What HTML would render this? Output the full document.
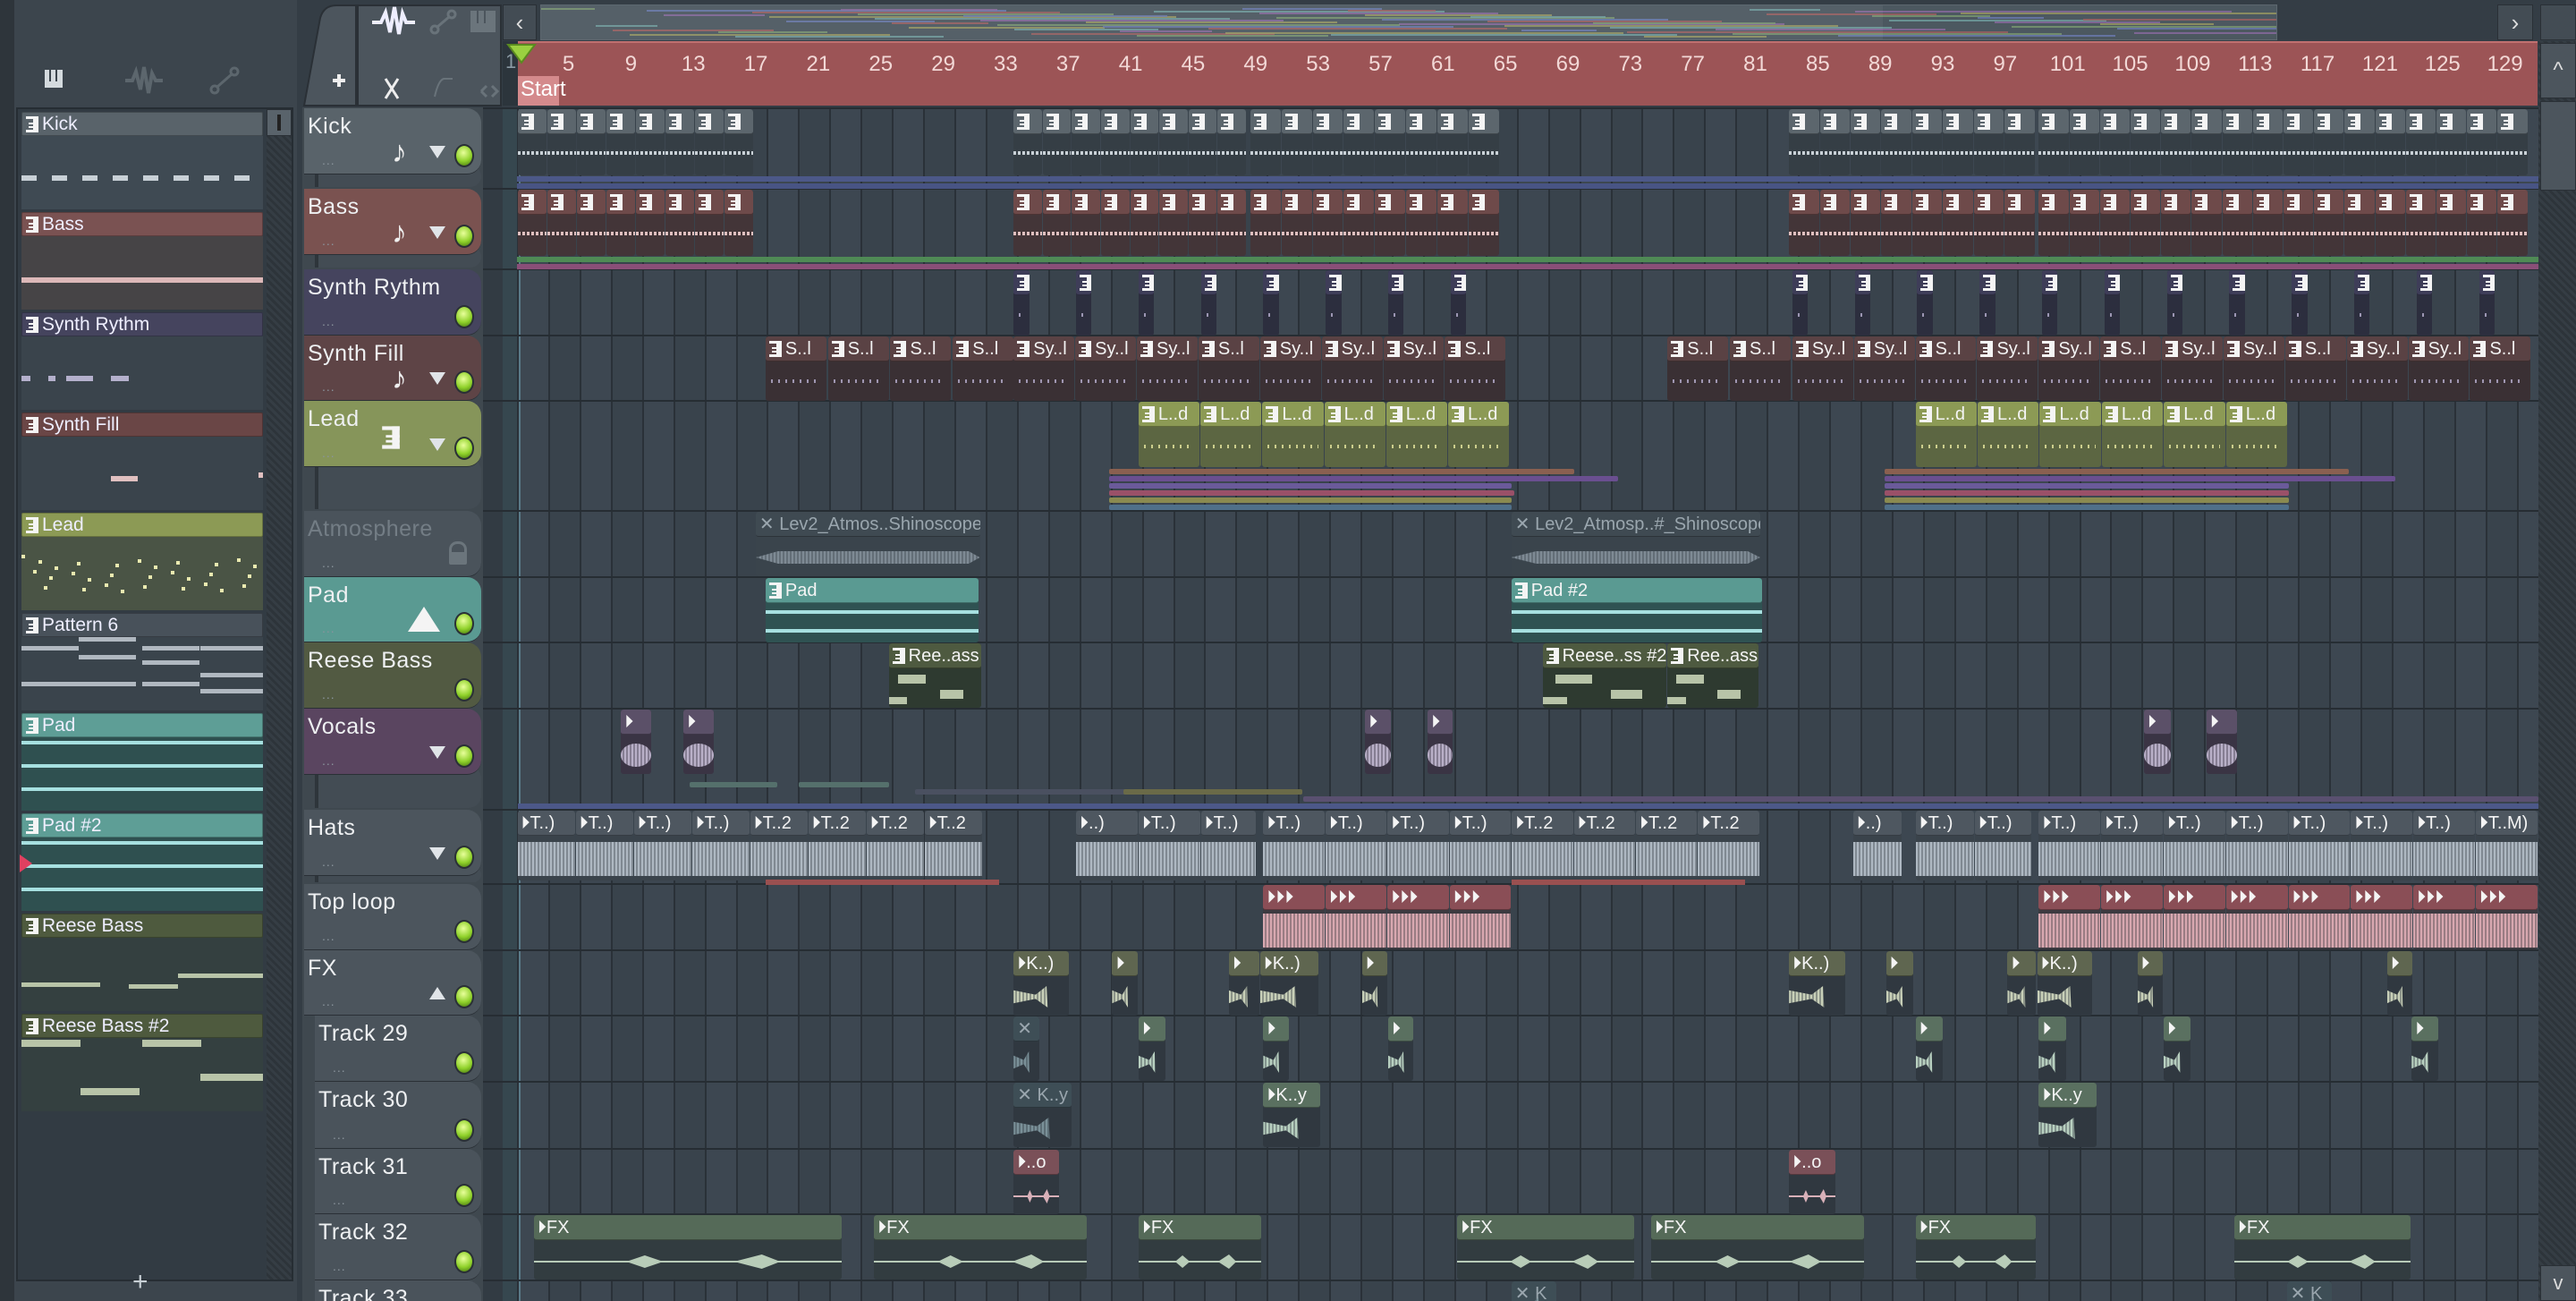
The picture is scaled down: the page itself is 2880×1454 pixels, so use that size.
<!DOCTYPE html>
<html><head><meta charset="utf-8">
<style>
*{box-sizing:border-box;margin:0;padding:0}
html,body{width:2880px;height:1454px;overflow:hidden;background:#343d45;font-family:"Liberation Sans Narrow","Liberation Sans",sans-serif;}
#root{position:relative;width:2880px;height:1454px;overflow:hidden;background:#343d45}
.a{position:absolute}
.t{color:#e8ecef;font-size:24px;white-space:nowrap;line-height:1}
.clip{position:absolute;overflow:hidden;border-radius:2px}
.ic{display:inline-block;width:14px;height:18px;vertical-align:-3px;margin-right:4px;background:
linear-gradient(#f4f4f4,#f4f4f4) 0 0/14px 3px no-repeat,
linear-gradient(#f4f4f4,#f4f4f4) 8px 0/6px 18px no-repeat,
linear-gradient(#f4f4f4,#f4f4f4) 0 15px/14px 3px no-repeat,
linear-gradient(#f4f4f4,#f4f4f4) 3px 7px/11px 2px no-repeat,
linear-gradient(#f4f4f4,#f4f4f4) 3px 11px/11px 2px no-repeat}
</style></head><body>
<div id="root">
<!-- left strip -->
<div class="a" style="left:0;top:0;width:16px;height:1454px;background:#2e353b"></div>
<div class="a" style="left:16px;top:0;width:316px;height:1454px;background:#3c454d"></div>
<div class="a" style="left:18px;top:120px;width:310px;height:1312px;background:#323b43;border:2px solid #262d33"></div>
<div class="a" style="left:298px;top:122px;width:28px;height:1308px;background:repeating-linear-gradient(45deg,#353d44 0 3px,#2d343a 3px 6px)"></div>
<div class="a" style="left:298px;top:122px;width:28px;height:30px;background:#59636b;border:1px solid #2a3036"><div class="a" style="left:11px;top:5px;width:4px;height:18px;background:#222"></div></div>
<div class="a t" style="left:148px;top:1418px;font-size:30px;color:#c8d0d6">+</div>

<!-- picker top icons -->
<svg class="a" style="left:40px;top:70px" width="280" height="40">
 <g fill="#d4dade"><rect x="10" y="8" width="20" height="20"/></g>
 <g fill="#3c454d"><rect x="15" y="8" width="2" height="13"/><rect x="22" y="8" width="2" height="13"/></g>
 <path d="M100 20 L108 20 L112 10 L117 30 L121 5 L126 34 L130 12 L134 20 L142 20" stroke="#5c666d" stroke-width="4" fill="none"/>
 <g stroke="#5c666d" stroke-width="3" fill="none"><circle cx="200" cy="30" r="4"/><circle cx="222" cy="10" r="4"/><line x1="203" y1="27" x2="219" y2="13"/></g>
</svg>

<!-- track header toolbar -->
<svg class="a" style="left:338px;top:0" width="225" height="120">
 <path d="M2 118 L20 20 Q24 6 38 6 L60 6 L60 118 Z" fill="#4c555d" stroke="#2a3036" stroke-width="2"/>
 <rect x="62" y="6" width="160" height="112" fill="#4c555d" stroke="#2a3036" stroke-width="2"/>
 <path d="M78 25 L88 25 L93 14 L98 36 L103 8 L108 38 L112 15 L116 25 L126 25" stroke="#eef" stroke-width="4" fill="none"/>
 <g stroke="#69737a" stroke-width="3" fill="none"><circle cx="148" cy="33" r="4"/><circle cx="167" cy="16" r="4"/><line x1="151" y1="30" x2="164" y2="19"/></g>
 <rect x="188" y="12" width="28" height="24" fill="#6b757c"/>
 <rect x="195" y="12" width="2" height="14" fill="#4c555d"/><rect x="203" y="12" width="2" height="14" fill="#4c555d"/>
 <path d="M34 90 L48 90 M41 83 L41 97" stroke="#eee" stroke-width="4"/>
 <path d="M93 88 L107 110 M107 88 L93 110" stroke="#eee" stroke-width="3"/>
 <path d="M148 108 Q152 90 158 88 L168 88" stroke="#69737a" stroke-width="2" fill="none"/>
 <path d="M200 102 L206 96 M200 102 L206 108 M212 96 L218 102 L212 108" stroke="#69737a" stroke-width="3" fill="none"/>
</svg>

<!-- top overview -->
<div class="a" style="left:562px;top:5px;width:38px;height:40px;background:#434c54;border:1px solid #2a3036;color:#ddd;font-size:26px;text-align:center;line-height:38px">‹</div>
<div class="a" style="left:604px;top:5px;width:1942px;height:40px;background:#4c5860;border:1px solid #5c676f;overflow:hidden" id="ov"></div>
<div class="a" style="left:2792px;top:5px;width:40px;height:40px;background:#434c54;border:1px solid #2a3036;color:#ddd;font-size:26px;text-align:center;line-height:38px">›</div>
<div class="a" style="left:2840px;top:5px;width:40px;height:40px;background:#434c54;border:1px solid #2a3036"></div>

<!-- ruler -->
<div class="a" style="left:562px;top:46px;width:17px;height:72px;background:#2c353c"></div>
<div class="a" style="left:579px;top:46px;width:2258px;height:72px;background:#9c5456;border-top:2px solid #c07070" id="ruler"></div>
<div class="a" style="left:579px;top:85px;width:46px;height:33px;background:#d48a8c"></div>
<div class="a t" style="left:582px;top:88px;font-size:24px;color:#fff">Start</div>
<div class="a t" style="left:565px;top:58px;font-size:22px;color:#8a9aa4">1</div>
<svg class="a" style="left:566px;top:48px" width="34" height="24"><path d="M2 2 L32 2 L17 22 Z" fill="#9ad040" stroke="#5a8a20" stroke-width="2"/></svg>

<!-- right scrollbar -->
<div class="a" style="left:2838px;top:46px;width:42px;height:1408px;background:repeating-linear-gradient(45deg,#353d44 0 3px,#2d343a 3px 6px)"></div>
<div class="a" style="left:2840px;top:48px;width:40px;height:62px;background:#4c555d;border:1px solid #2a3036;color:#ddd;text-align:center;font-size:24px;line-height:60px">^</div>
<div class="a" style="left:2840px;top:113px;width:40px;height:100px;background:#4c555d;border:1px solid #2a3036"></div>
<div class="a" style="left:2840px;top:1414px;width:40px;height:40px;background:#4c555d;border:1px solid #2a3036;color:#ddd;text-align:center;font-size:22px;line-height:38px">v</div>

<!-- grid -->
<div class="a" id="grid" style="left:538px;top:120px;width:2300px;height:1334px;background:#3d4751;overflow:hidden"></div>
</div>

<script>
const P=v=>v*1.8367;
function el(parent,css,html){const d=document.createElement('div');d.style.cssText='position:absolute;'+css;if(html)d.innerHTML=html;parent.appendChild(d);return d;}
const B=document.getElementById('root'),G=document.getElementById('grid');
const GX=538,GY=120;
el(G,'left:0;top:0;width:24px;height:1334px;background:#323b43');
el(G,'left:24px;top:0;width:16px;height:1334px;background:#36474f');
el(G,'left:42px;top:0;width:2px;height:1334px;background:#5a7a88');
for(let i=0;i<66;i++){let x=40+i*34.93;
 if(i%2==1)el(G,`left:${x}px;top:0;width:35px;height:1334px;background:#39434c`);
 el(G,`left:${x}px;top:0;width:2px;height:1334px;background:#2a3138`);}
const R=document.getElementById('ruler');
for(let n=5;n<=129;n+=4){let cx=565.7+(n-1)*17.46-579;el(R,`left:${cx-20}px;top:10px;width:40px;text-align:center;color:#f2d8d6;font-size:24px;font-family:'Liberation Sans Narrow','Liberation Sans',sans-serif`,n);}
const O=document.getElementById('ov');
const oc=['#7a9a70','#8a6aa0','#6a7ab0','#9a9a60','#a06060','#70a0a0'];
for(let i=0;i<60;i++){let x=(i*137)%1800,w=60+(i*53)%400,y=3+(i*7)%32;el(O,`left:${x}px;top:${y}px;width:${w}px;height:2px;background:${oc[i%6]};opacity:.8`);}
el(O,'left:0;top:0;width:1500px;height:40px;background:rgba(255,255,255,0.05)');

const tops=[121,211,301,375,448,571,645,718,792,905,988,1062,1135,1209,1284,1357,1431,1520];
const hexH=[[0,'Kick','#59636a',195,1],[1,'Bass','#7a5250',285,1],[2,'Synth Rythm','#45445e',375,0],[3,'Synth Fill','#5e4446',448,1],[4,'Lead','#86955a',522,2],[5,'Atmosphere','#4a535b',645,3],[6,'Pad','#5a9a92',718,4],[7,'Reese Bass','#525a42',792,0],[8,'Vocals','#5a4560',866,5],[9,'Hats','#4c555d',979,5],[10,'Top loop','#4c555d',1062,0],[11,'FX','#4c555d',1135,6],[12,'Track 29','#4a535b',1209,0],[13,'Track 30','#4a535b',1284,0],[14,'Track 31','#4a535b',1357,0],[15,'Track 32','#4a535b',1431,0],[16,'Track 33','#4a535b',1505,0]];
tops.forEach(t=>el(G,`left:0;top:${t-GY-1}px;width:2300px;height:2px;background:#262d33`));
el(B,'left:338px;top:120px;width:202px;height:1334px;background:#3f484f');
hexH.forEach(([i,name,col,bot,icon])=>{
 let top=tops[i],gb=tops[i+1];
 let sub=i>=12;let lx=sub?352:340;
 if(bot<gb-4) el(B,`left:${lx+12}px;top:${bot-10}px;width:${538-lx-12}px;height:${gb-bot+8}px;background:#434c54;border-radius:0 14px 14px 0;border-left:4px solid #2e353b`);
 let h=el(B,`left:${lx}px;top:${top}px;width:${538-lx}px;height:${bot-top}px;background:${col};border-radius:0 16px 16px 0;border-bottom:1px solid #2a3036`);
 el(h,`left:4px;top:6px;font-size:25px;color:${i==5?'#737d85':'#eef0f2'};white-space:nowrap;letter-spacing:0.5px`,name);
 el(h,`left:20px;top:${bot-top-24}px;color:#8a949c;font-size:14px;letter-spacing:1px`,'...');
 if(i!=5){el(h,`left:${538-lx-30}px;top:${bot-top-34}px;width:22px;height:26px;border-radius:50%;background:radial-gradient(circle at 45% 35%,#e8ff9a,#8fd12a 55%,#3f6a10);border:2px solid #2a3036`);}
 if(icon==1) el(h,`left:${538-lx-100}px;top:${bot-top-44}px;font-size:34px;color:#eee`,'♪');
 if(icon==1||icon==5) el(h,`left:${538-lx-58}px;top:${bot-top-32}px;width:0;height:0;border-left:9px solid transparent;border-right:9px solid transparent;border-top:14px solid #e0e4e8`);
 if(icon==6) el(h,`left:${538-lx-58}px;top:${bot-top-32}px;width:0;height:0;border-left:9px solid transparent;border-right:9px solid transparent;border-bottom:14px solid #e0e4e8`);
 if(icon==4) el(h,`left:${538-lx-82}px;top:${bot-top-40}px;width:0;height:0;border-left:18px solid transparent;border-right:18px solid transparent;border-bottom:28px solid #f4f4f4`);
 if(icon==2) el(h,`left:${538-lx-108}px;top:${bot-top-42}px`,'<span class="ic" style="transform:scale(1.4)"></span>');
 if(icon==2) el(h,`left:${538-lx-58}px;top:${bot-top-32}px;width:0;height:0;border-left:9px solid transparent;border-right:9px solid transparent;border-top:14px solid #e0e4e8`);
 if(icon==3) el(h,`left:${538-lx-36}px;top:${bot-top-40}px;width:20px;height:26px;border:3px solid #6b757c;border-radius:9px 9px 2px 2px;border-bottom:14px solid #6b757c`);
});

const TY={
 kick:['#5c666d','#353e45','pat'],bass:['#6e4a4a','#433538','pat'],synr:['#3e3d58','#2c2e3e','pat'],synf:['#5a4244','#3a3034','pat'],
 lead:['#8c9a55','#5c6642','pat'],atm:['#3f4a52','#3a444c','wave'],pad:['#5a9a92','#2f5252','pad'],reese:['#4e5a40','#2e3a30','reese'],
 voc:['#5b5068','#3a3444','wave'],hats:['#4e5760','#3a434b','wave'],top:['#8a4e56','#3c3a40','wave'],fx:['#5f6650','#303840','wave'],
 t29:['#3e4e56','#303840','wave'],t29g:['#5a7060','#303840','wave'],fxl:['#556a58','#323c40','line'],t31:['#7a5058','#303840','line']};
const WC={atm:'#7e8a94',voc:'#b9b0c8',hats:'#aeb8c2',top:'#d8a8b0',fx:'#c8d0b8',t29:'#7a9098',t29g:'#b8d0c0',fxl:'#b8ccb8',t31:'#d8b0b8'};
function clip(ti,x1,x2,ty,label,h){
 let [hc,bc,kind]=TY[ty];let top=tops[ti]+1;let ht=h||72;
 let X=P(x1),W=P(x2)-P(x1)-1;
 let c=el(G,`left:${X-GX}px;top:${top-GY}px;width:${W}px;height:${ht}px;background:${bc};border-radius:3px`);c.className='clip';
 let hd=el(c,`left:0;right:0;top:0;height:28px;background:${hc};border-radius:3px;color:#f4f4f4;font-size:20px;line-height:28px;padding-left:4px;white-space:nowrap;overflow:hidden;border-bottom:1px solid rgba(0,0,0,.3)`);
 let icon=(kind=='pat'||kind=='pad'||kind=='reese')?'<span class="ic"></span>':(ty=='atm'||ty=='t29'&&label.indexOf('✕')==0?'':'⏵');
 hd.innerHTML=icon+(label||'');
 if(ty=='atm'||ty=='t29') hd.style.color='#9aa6ae';
 let by=30,bh=ht-30;
 if(kind=='pat'){let lc=ty=='kick'?'#c8d0d6':ty=='bass'?'#e0c0c0':ty=='lead'?'#e8e8a0':'#b8b0d0';
  if(ty=='kick'||ty=='bass') el(c,`left:0;right:0;top:${by+17}px;height:4px;background:repeating-linear-gradient(90deg,${lc} 0 3px,transparent 3px 5px)`);
  else el(c,`left:6px;right:6px;top:${by+18}px;height:4px;background:repeating-linear-gradient(90deg,${lc} 0 2px,transparent 2px 8px);opacity:.8`);}
 if(kind=='wave'){let wc=WC[ty];let amp=ty=='hats'?38:ty=='top'?38:ty=='voc'?26:ty=='atm'?14:24;
  el(c,`left:0;right:0;top:${by+bh/2-amp/2}px;height:${amp}px;background:repeating-linear-gradient(90deg,${wc} 0 2px,${wc}99 2px 4px);`+((ty=='fx'||ty=='t29'||ty=='t29g')?`clip-path:polygon(0 20%,40% 40%,60% 0,62% 100%,40% 60%,0 80%)`:ty=='voc'?`border-radius:50%`:ty=='atm'?`clip-path:polygon(0 50%,10% 0,95% 0,100% 50%,95% 100%,10% 100%)`:''));}
 if(kind=='line'){let wc=WC[ty];el(c,`left:0;right:0;top:${by+bh/2}px;height:2px;background:${wc}`);
  el(c,`left:30%;width:12%;top:${by+bh/2-6}px;height:14px;background:${wc};clip-path:polygon(0 50%,50% 0,100% 50%,50% 100%)`);
  el(c,`left:65%;width:15%;top:${by+bh/2-7}px;height:16px;background:${wc};clip-path:polygon(0 50%,60% 0,100% 50%,60% 100%)`);}
 if(kind=='pad'){for(let k=0;k<3;k++)el(c,`left:0;right:0;top:${by+6+k*21}px;height:4px;background:#a6e0e0`);}
 if(kind=='reese'){el(c,`left:10%;width:30%;top:${by+5}px;height:10px;background:#b8c4a8`);el(c,`left:55%;width:25%;top:${by+22}px;height:10px;background:#b8c4a8`);el(c,`left:0;width:20%;top:${by+30}px;height:8px;background:#b8c4a8`);}
 return c;}
const kb=[[315,459,8],[617,759,8],[761,913,8],[1089,1239,8],[1241,1539,16]];
kb.forEach(([a,b,n])=>{let w=(b-a)/n;for(let k=0;k<n;k++){clip(0,a+k*w,a+(k+1)*w,'kick','',74);clip(1,a+k*w,a+(k+1)*w,'bass','',74);}});
el(G,`left:40px;top:${197-GY}px;width:2260px;height:6px;background:#4c5888`);
el(G,`left:40px;top:${205-GY}px;width:2260px;height:6px;background:#485484`);
el(G,`left:40px;top:${287-GY}px;width:2260px;height:6px;background:#4f8a55`);
el(G,`left:40px;top:${295-GY}px;width:2260px;height:6px;background:#8a4f78`);
[617,655,693,731,769,807,845,883,1091,1129,1167,1205,1243,1281,1319,1357,1395,1433,1471,1509].forEach(x=>clip(2,x,x+10,'synr','',73));
[466,504,542,580].forEach(x=>clip(3,x,x+37.5,'synf','S..l',72));
for(let k=0;k<8;k++)clip(3,617+k*37.5,617+(k+1)*37.5,'synf',k%4==3?'S..l':'Sy..l',72);
[1015,1053].forEach(x=>clip(3,x,x+37.5,'synf','S..l',72));
for(let k=0;k<12;k++)clip(3,1091+k*37.5,1091+(k+1)*37.5,'synf',k%3==2?'S..l':'Sy..l',72);
for(let k=0;k<6;k++){clip(4,693+k*37.7,693+(k+1)*37.7,'lead','L..d',73);clip(4,1166+k*37.8,1166+(k+1)*37.8,'lead','L..d',73);}
const lc=['#8a6050','#6a4f90','#6a5a9a','#9a5068','#8a8a50','#50708a'];
lc.forEach((c,k)=>{el(G,`left:${P(675)-GX}px;top:${524-GY+k*8}px;width:${P([958,985,920,922,920,920][k])-P(675)}px;height:6px;background:${c};border-radius:2px`);
 el(G,`left:${P(1147)-GX}px;top:${524-GY+k*8}px;width:${P([1430,1458,1393,1393,1393,1393][k])-P(1147)}px;height:6px;background:${c};border-radius:2px`);});
clip(5,460,597,'atm','✕ Lev2_Atmos..Shinoscope',72);
clip(5,920,1072,'atm','✕ Lev2_Atmosp..#_Shinoscope',72);
clip(6,466,596,'pad','Pad',72);clip(6,920,1073,'pad','Pad #2',72);
clip(7,541,598,'reese','Ree..ass',72);clip(7,939,1015,'reese','Reese..ss #2',72);clip(7,1015,1071,'reese','Ree..ass',72);
[[378,397],[416,435],[831,847],[869,885],[1305,1322],[1343,1362]].forEach(([a,b])=>clip(8,a,b,'voc','',72));
[[1,420,473,'#55706c'],[1,486,541,'#55706c'],[2,557,793,'#4a5060'],[2,684,793,'#6a6a48'],[4,541,1545,'#4c5a90'],[3,793,1545,'#5a5070']].forEach(([r,a,b,c])=>el(G,`left:${P(a)-GX}px;top:${866-GY+r*8}px;width:${P(b)-P(a)}px;height:6px;background:${c};border-radius:2px`));
el(G,`left:${P(315)-GX}px;top:${898-GY}px;width:${P(1545)-P(315)}px;height:6px;background:#4c5888`);
for(let k=0;k<8;k++)clip(9,315+k*35.4,315+(k+1)*35.4,'hats',k<4?'T..)':'T..2',78);
[[655,693,'..)'],[693,731,'T..)'],[731,765,'T..)']].forEach(([a,b,l])=>clip(9,a,b,'hats',l,78));
for(let k=0;k<8;k++)clip(9,769+k*37.8,769+(k+1)*37.8,'hats',k<4?'T..)':'T..2',78);
clip(9,1128,1158,'hats','..)',78);clip(9,1166,1202,'hats','T..)',78);clip(9,1202,1237,'hats','T..)',78);
for(let k=0;k<8;k++)clip(9,1241+k*38,1241+(k+1)*38,'hats',k==7?'T..M)':'T..)',78);
el(G,`left:${P(466)-GX}px;top:${983-GY}px;width:${P(608)-P(466)}px;height:6px;background:#9a5050`);
el(G,`left:${P(920)-GX}px;top:${983-GY}px;width:${P(1062)-P(920)}px;height:6px;background:#9a5050`);
for(let k=0;k<4;k++)clip(10,769+k*37.8,769+(k+1)*37.8,'top','⏵⏵',72);
for(let k=0;k<8;k++)clip(10,1241+k*38,1241+(k+1)*38,'top','⏵⏵',72);
[[617,651,'K..)'],[677,693,''],[748,767,''],[767,803,'K..)'],[829,845,''],[1089,1124,'K..)'],[1148,1165,''],[1222,1240,''],[1240,1274,'K..)'],[1301,1317,''],[1453,1469,'']].forEach(([a,b,l])=>clip(11,a,b,'fx',l,72));
[[617,633,'t29','✕'],[693,710,'t29g',''],[769,785,'t29g',''],[845,861,'t29g',''],[1166,1183,'t29g',''],[1241,1258,'t29g',''],[1317,1334,'t29g',''],[1468,1485,'t29g','']].forEach(([a,b,t,l])=>clip(12,a,b,t,l,72));
clip(13,617,653,'t29','✕ K..y',72);clip(13,769,804,'t29g','K..y',72);clip(13,1241,1277,'t29g','K..y',72);
clip(14,617,645,'t31','..o',72);clip(14,1089,1118,'t31','..o',72);
[[325,513],[532,662],[693,768],[887,995],[1005,1135],[1166,1240],[1360,1468]].forEach(([a,b])=>clip(15,a,b,'fxl','FX',72));
clip(16,920,948,'t29','✕ K',30);clip(16,1392,1420,'t29','✕ K',30);

const pk=[['Kick','#59636a','#3f4a53','kick'],['Bass','#7a5252','#464446','bass'],['Synth Rythm','#45445e','#3a444c','sr'],['Synth Fill','#6a4646','#3a444c','sf'],['Lead','#8c9a55','#4a5445','lead'],['Pattern 6','#48515a','#3a444c','p6'],['Pad','#5e9e96','#2f5050','pad'],['Pad #2','#5e9e96','#2f5050','pad'],['Reese Bass','#4e5a3e','#344040','r1'],['Reese Bass #2','#4e5a3e','#344040','r2']];
pk.forEach(([n,hc,bc,k],i)=>{let y=125+i*112;
 let b=el(B,`left:24px;top:${y+27}px;width:270px;height:82px;background:${bc}`);
 el(B,`left:24px;top:${y}px;width:270px;height:27px;background:${hc};border:1px solid rgba(0,0,0,.25);border-radius:2px;color:#eef;font-size:21px;line-height:25px;padding-left:4px;white-space:nowrap`,'<span class="ic"></span>'+n);
 if(k=='kick')for(let j=0;j<8;j++)el(b,`left:${j*34}px;top:44px;width:17px;height:6px;background:#c8d0d6`);
 if(k=='bass')el(b,`left:0;width:270px;top:46px;height:6px;background:#dcb8b8`);
 if(k=='sr')[[0,10],[30,8],[50,30],[100,20]].forEach(([a,w])=>el(b,`left:${a}px;width:${w}px;top:44px;height:6px;background:#b4b0cc`));
 if(k=='sf'){el(b,`left:100px;width:30px;top:44px;height:6px;background:#e0c0c0`);el(b,`left:265px;width:5px;top:40px;height:6px;background:#e0c0c0`);}
 if(k=='lead')for(let j=0;j<30;j++)el(b,`left:${(j*37)%265}px;top:${20+(j*13)%40}px;width:4px;height:4px;background:#eaeab0`);
 if(k=='p6')[[0,10,64],[64,0,64],[64,20,64],[135,10,64],[135,26,64],[200,10,70],[200,40,70],[0,50,64],[64,50,64],[135,50,64],[200,58,70]].forEach(([a,t,w])=>el(b,`left:${a}px;width:${w}px;top:${t}px;height:5px;background:#b0b8c0`));
 if(k=='pad')for(let j=0;j<3;j++)el(b,`left:0;width:270px;top:${4+j*26}px;height:4px;background:#a6e0e0`);
 if(k=='r1')[[0,50,88],[120,52,55],[175,40,95]].forEach(([a,t,w])=>el(b,`left:${a}px;width:${w}px;top:${t}px;height:5px;background:#b8c4a8`));
 if(k=='r2')[[0,2,66],[135,2,66],[200,40,70],[66,56,66]].forEach(([a,t,w])=>el(b,`left:${a}px;width:${w}px;top:${t}px;height:8px;background:#b8c4a8`));
});
el(B,'left:22px;top:955px;width:0;height:0;border-top:10px solid transparent;border-bottom:10px solid transparent;border-left:14px solid #e04060');
</script>
</body></html>
